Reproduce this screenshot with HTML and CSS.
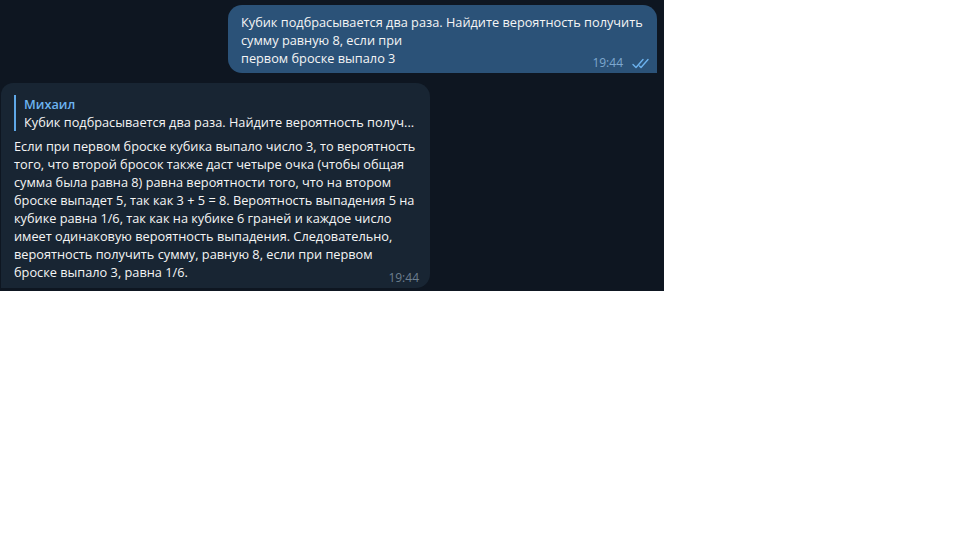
FILE: index.html
```html
<!DOCTYPE html>
<html lang="ru">
<head>
<meta charset="utf-8">
<link rel="stylesheet" href="styles.css">
</head>
<body>
<div class="chat">
  <div class="row row-out">
    <div class="bubble bubble-out">
      <div class="text">Кубик подбрасывается два раза. Найдите вероятность получить<br>сумму равную 8, если при</div>
      <div class="last">
        <span>первом броске выпало 3</span>
        <span class="meta meta-out">19:44
          <svg class="checks" width="18" height="11" viewBox="0 0 18 11"><path d="M1 6.5 L4 9.5 L11 1.5 M7.5 8 L9 9.5 L16 1.5" fill="none" stroke="#6cb2ee" stroke-width="1.4" stroke-linecap="round" stroke-linejoin="round"/></svg>
        </span>
      </div>
    </div>
  </div>
  <div class="row row-in">
    <div class="bubble bubble-in">
      <div class="reply">
        <div class="reply-name">Михаил</div>
        <div class="reply-text">Кубик подбрасывается два раза. Найдите вероятность получ...</div>
      </div>
      <div class="text">Если при первом броске кубика выпало число 3, то вероятность<br>того, что второй бросок также даст четыре очка (чтобы общая<br>сумма была равна 8) равна вероятности того, что на втором<br>броске выпадет 5, так как 3 + 5 = 8. Вероятность выпадения 5 на<br>кубике равна 1/6, так как на кубике 6 граней и каждое число<br>имеет одинаковую вероятность выпадения. Следовательно,<br>вероятность получить сумму, равную 8, если при первом</div>
      <div class="last">
        <span>броске выпало 3, равна 1/6.</span>
        <span class="meta meta-in">19:44</span>
      </div>
    </div>
  </div>
</div>
</body>
</html>
```

FILE: styles.css
```css
html, body {
  margin: 0;
  padding: 0;
  background: #ffffff;
}
.chat {
  width: 664px;
  height: 291px;
  background: #0e1621;
  overflow: hidden;
  display: flex;
  flex-direction: column;
  font-family: "Open Sans", "Noto Sans", sans-serif;
  font-size: 12.75px;
  line-height: 18px;
  color: #f5f5f5;
}
.row {
  display: flex;
}
.row-out {
  justify-content: flex-end;
  padding: 5px 7px 0 0;
}
.row-in {
  justify-content: flex-start;
  padding: 10px 0 0 1px;
}
.bubble {
  box-sizing: border-box;
  white-space: nowrap;
}
.bubble-out {
  width: 429px;
  background: #2b5278;
  border-radius: 14px 14px 0 14px;
  padding: 8px 13px 6px 13px;
}
.bubble-in {
  width: 429px;
  background: #182533;
  border-radius: 12px 14px 14px 0;
  padding: 12px 11px 7px 13px;
}
.last {
  display: flex;
  justify-content: space-between;
  align-items: flex-end;
}
.meta {
  display: flex;
  align-items: center;
  font-size: 12px;
  line-height: 14px;
  margin-bottom: -3px;
}
.meta-out {
  color: #7ea8cf;
  gap: 9px;
  margin-right: -6px;
}
.meta-in {
  color: #6d7f8f;
  margin-bottom: -4px;
}
.checks {
  display: block;
}
.reply {
  border-left: 2px solid #5fa8e8;
  padding-left: 8px;
  margin-bottom: 6px;
}
.reply-name {
  color: #6cb3f0;
  font-weight: 600;
}
```
